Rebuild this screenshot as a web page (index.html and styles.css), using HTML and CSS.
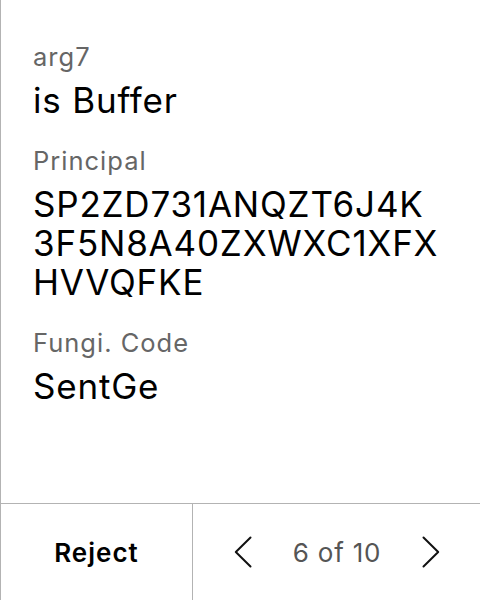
FILE: index.html
```html
<!DOCTYPE html>
<html lang="en">
<head>
<meta charset="utf-8">
<link rel="stylesheet" href="styles.css">
</head>
<body>
<div class="panel">
  <div class="fields">
    <div class="field">
      <div class="label">arg7</div>
      <div class="value">is Buffer</div>
    </div>
    <div class="field">
      <div class="label">Principal</div>
      <div class="value">SP2ZD731ANQZT6J4K<br>3F5N8A40ZXWXC1XFX<br>HVVQFKE</div>
    </div>
    <div class="field">
      <div class="label">Fungi. Code</div>
      <div class="value">SentGe</div>
    </div>
  </div>
  <div class="footer">
    <div class="reject">Reject</div>
    <div class="pager">
      <svg class="chev" width="18" height="32" viewBox="0 0 18 32"><path d="M16.5 1.5 L1.8 16 L16.5 30.5" fill="none" stroke="#111" stroke-width="2" stroke-linecap="round" stroke-linejoin="round"/></svg>
      <span class="count">6 of 10</span>
      <svg class="chev" width="18" height="32" viewBox="0 0 18 32"><path d="M1.5 1.5 L16.2 16 L1.5 30.5" fill="none" stroke="#111" stroke-width="2" stroke-linecap="round" stroke-linejoin="round"/></svg>
    </div>
  </div>
</div>
</body>
</html>
```
FILE: styles.css
```css
html, body {
  margin: 0;
  padding: 0;
  background: #fff;
}
body {
  font-family: Inter, "Noto Sans", sans-serif;
  color: #000;
}
.panel {
  width: 480px;
  height: 600px;
  box-sizing: border-box;
  border-left: 1px solid #b3b3b3;
  display: flex;
  flex-direction: column;
}
.fields {
  flex: 1;
  padding: 42px 0 0 32px;
  display: flex;
  flex-direction: column;
  gap: 26px;
}
.label {
  font-size: 25.5px;
  line-height: 30px;
  letter-spacing: 1px;
  color: #666;
  margin-bottom: 9px;
}
.value {
  font-size: 35px;
  line-height: 39px;
  letter-spacing: 0.8px;
  color: #000;
}
.footer {
  height: 96px;
  border-top: 1px solid #b3b3b3;
  display: flex;
}
.reject {
  width: 191px;
  border-right: 1px solid #b3b3b3;
  display: flex;
  align-items: center;
  justify-content: center;
  font-size: 26px;
  font-weight: 600;
  letter-spacing: 1px;
}
.pager {
  flex: 1;
  display: flex;
  align-items: center;
  justify-content: space-between;
  padding: 0 40px 0 41px;
}
.count {
  font-size: 26px;
  letter-spacing: 0.8px;
  color: #555;
}
.chev {
  display: block;
}
```
